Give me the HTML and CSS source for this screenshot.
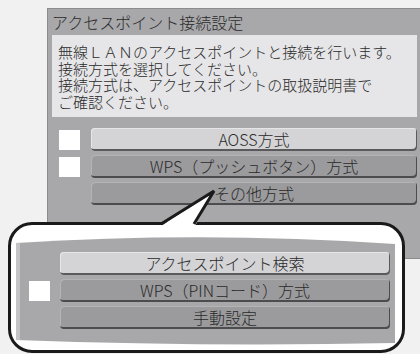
FILE: index.html
```html
<!DOCTYPE html>
<html lang="ja">
<head>
    <meta charset="UTF-8">
    <meta name="viewport" content="width=device-width, initial-scale=1.0">
    <title>アクセスポイント接続設定</title>
    <link rel="stylesheet" href="styles.css">
</head>
<body>
    <div class="panel">
        <div class="panel-title">アクセスポイント接続設定</div>
        <div class="message">
            無線ＬＡＮのアクセスポイントと接続を行います。<br>
            接続方式を選択してください。<br>
            接続方式は、アクセスポイントの取扱説明書で<br>
            ご確認ください。
        </div>
        <div class="menu">
            <div class="row"><span class="mark"></span><div class="btn active">AOSS方式</div></div>
            <div class="row"><span class="mark"></span><div class="btn">WPS（プッシュボタン）方式</div></div>
            <div class="row"><span class="mark blank"></span><div class="btn">その他方式</div></div>
        </div>
    </div>

    <!-- magnified sub menu -->
    <div class="callout">
        <div class="lens">
            <div class="row"><span class="mark blank"></span><div class="btn active">アクセスポイント検索</div></div>
            <div class="row"><span class="mark"></span><div class="btn">WPS（PINコード）方式</div></div>
            <div class="row"><span class="mark blank"></span><div class="btn">手動設定</div></div>
        </div>
    </div>
    <svg class="pointer" width="420" height="354" viewBox="0 0 420 354">
        <polygon points="161,226 214,191 195,226" fill="#fff"/>
        <polyline points="161,224 214,191 194,224" fill="none" stroke="#1a1a1a" stroke-width="3" stroke-linejoin="miter"/>
    </svg>
</body>
</html>
```

FILE: styles.css
```css
body {
    margin: 0;
    width: 420px;
    height: 354px;
    overflow: hidden;
    position: relative;
    background: #f1f1f1;
    font-family: "Noto Sans CJK JP", "Noto Sans", sans-serif;
    font-weight: 300;
    color: #2a2a2a;
}
.panel {
    margin: 8px 0 0 47px;
    width: 375px;
    box-sizing: border-box;
    background: #a8a8aa;
    border: 1px solid #8c8c8e;
    padding: 0 4px 53px 4px;
}
.panel-title {
    height: 26px;
    line-height: 26px;
    font-size: 16px;
}
.message {
    background: #e6e6e8;
    height: 82px;
    box-sizing: border-box;
    padding: 9px 0 0 6px;
    font-size: 15px;
    line-height: 16.5px;
}
.menu {
    display: flex;
    flex-direction: column;
    gap: 4px;
    padding: 11px 0 0 7px;
}
.row {
    display: flex;
    align-items: center;
    gap: 11px;
    height: 23px;
}
.mark {
    width: 21px;
    height: 20px;
    background: #fff;
    flex: none;
}
.mark.blank { background: transparent; }
.btn {
    flex: 1;
    height: 23px;
    box-sizing: border-box;
    border-radius: 4px;
    background: #9b9b9d;
    box-shadow: inset -1px -2px 0 #4c4c4e, inset 1px 1px 0 #b4b4b6;
    font-size: 16px;
    line-height: 22px;
    text-align: center;
}
.btn.active {
    background: #d4d4d6;
    box-shadow: inset -1px -2px 0 #5a5a5c, inset 1px 1px 0 #e6e6e8;
}
.callout {
    position: absolute;
    left: 8px;
    top: 222px;
    width: 397px;
    box-sizing: border-box;
    border: 3px solid #1a1a1a;
    border-radius: 24px;
    background: #fff;
    padding: 12px 7px 5px 5px;
}
.lens {
    height: 108px;
    box-sizing: border-box;
    background: #a8a8aa;
    border-left: 4px solid #c4c4c6;
    clip-path: path('M0 6 Q190 -6 379 7 L379 106 Q190 110 0 103 Z');
    display: flex;
    flex-direction: column;
    gap: 4px;
    padding: 15px 5px 0 9px;
}
.lens .row { gap: 10px; }
.pointer {
    position: absolute;
    left: 0;
    top: 0;
    pointer-events: none;
}
```
